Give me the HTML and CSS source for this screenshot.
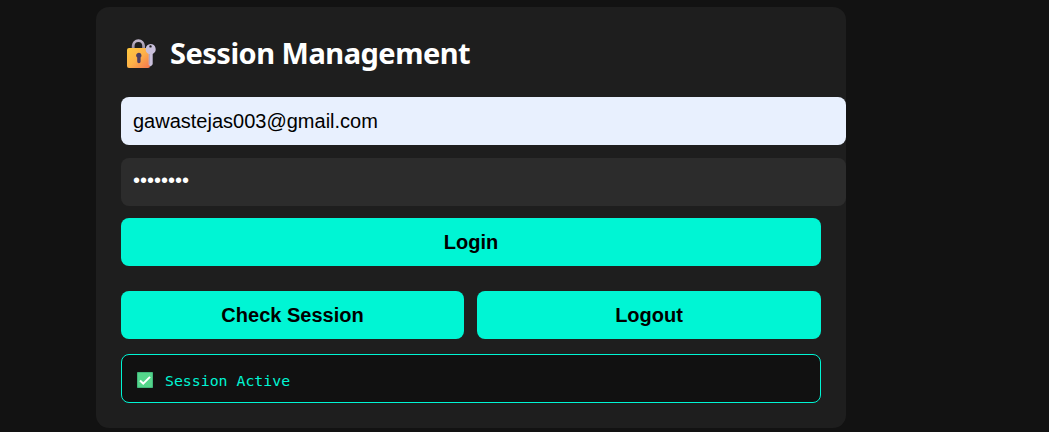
FILE: index.html
```html
<!DOCTYPE html>
<html lang="en">
<head>
<meta charset="utf-8">
<title>Session Management</title>
<link rel="stylesheet" href="styles.css">
</head>
<body>
<main class="card">
  <h1 class="title">
    <svg class="lock" viewBox="0 0 32 32" aria-hidden="true">
      <defs>
        <linearGradient id="gold" x1="0" y1="0" x2="1" y2="1">
          <stop offset="0" stop-color="#ffc83d"/>
          <stop offset=".5" stop-color="#fdb148"/>
          <stop offset="1" stop-color="#f4744f"/>
        </linearGradient>
        <linearGradient id="steel" x1="0" y1="0" x2="0" y2="1">
          <stop offset="0" stop-color="#c0b5c9"/>
          <stop offset="1" stop-color="#8e8399"/>
        </linearGradient>
      </defs>
      <path d="M8.2 12V7.8a5.2 5.2 0 0 1 10.4 0V12" fill="none" stroke="url(#steel)" stroke-width="2.8"/>
      <rect x="2" y="10" width="23" height="20" rx="2" fill="url(#gold)"/>
      <path d="M11.1 17.6a2.7 2.7 0 1 1 4.5 2v4a1.6 1.6 0 0 1-3.4 0v-4a2.7 2.7 0 0 1-1.1-2z" fill="#4b3d62"/>
      <path fill-rule="evenodd" d="M25.5 6a5.2 5.2 0 0 1 2.2 9.9v10.3l-2 2.3-2-1.7V15.9A5.2 5.2 0 0 1 25.5 6zm0 1.2a1.2 1.2 0 1 0 0 2.4 1.2 1.2 0 0 0 0-2.4z" fill="#c9bfdb"/>
      <path d="M24.4 16v10.6" stroke="#a99abd" stroke-width=".8"/>
    </svg>
    <span class="title-text">Session Management</span>
  </h1>
  <div class="field field-email">gawastejas003@gmail.com</div>
  <div class="field field-password">••••••••</div>
  <button class="button" type="button">Login</button>
  <div class="actions">
    <button class="button" type="button">Check Session</button>
    <button class="button" type="button">Logout</button>
  </div>
  <div class="status">
    <svg class="check" viewBox="0 0 16 16" aria-hidden="true">
      <rect width="16" height="16" rx=".8" fill="#42b77b"/>
      <rect x="1" y="1" width="14" height="14" rx="1" fill="#55d58b"/>
      <path d="M3 8.6l3.2 3L13 4.9" fill="none" stroke="#fff" stroke-width="2"/>
    </svg>
    <span class="message">Session Active</span>
  </div>
</main>
</body>
</html>
```
FILE: styles.css
```css
* { box-sizing: border-box; }

body {
  margin: 0;
  height: 432px;
  overflow: hidden;
  background: #121212;
  color: #fff;
  font-family: "Liberation Sans", Arial, sans-serif;
}

.card {
  width: 750px;
  height: 421px;
  margin: 7px 0 0 96px;
  padding: 25px;
  background: #1e1e1e;
  border-radius: 13px;
}

.title {
  display: flex;
  align-items: center;
  height: 44px;
  margin: 0 0 21px;
  padding-left: 4px;
  gap: 13px;
  font: bold 29px/42px "Noto Sans", "Open Sans", sans-serif;
  letter-spacing: -0.5px;
  white-space: nowrap;
}

.title-text {
  padding-bottom: 2px;
}

.lock {
  width: 32px;
  height: 32px;
}

.field {
  width: 725px;
  height: 48px;
  padding: 0 12px;
  border-radius: 8px;
  font-size: 20px;
  line-height: 48px;
}

.field-email {
  margin-bottom: 13px;
  background: #e8f0fe;
  color: #000;
}

.field-password {
  margin-bottom: 12px;
  background: #2c2c2c;
  line-height: 45px;
}

.button {
  display: block;
  width: 100%;
  height: 48px;
  padding: 0;
  border: 0;
  border-radius: 8px;
  background: #00f5d4;
  color: #000;
  font: bold 20px/48px "Liberation Sans", Arial, sans-serif;
}

.actions {
  display: grid;
  grid-template-columns: 343px 344px;
  gap: 13px;
  margin: 25px 0 15px;
}

.status {
  display: flex;
  align-items: center;
  gap: 12px;
  height: 49px;
  padding: 3px 15px 0;
  border: 1px solid #00f5d4;
  border-radius: 8px;
  background: #111;
  color: #00f5d4;
  font: 14.85px/20px "DejaVu Sans Mono", monospace;
}

.message {
  padding-top: 2px;
}

.check {
  width: 16px;
  height: 16px;
}
```
